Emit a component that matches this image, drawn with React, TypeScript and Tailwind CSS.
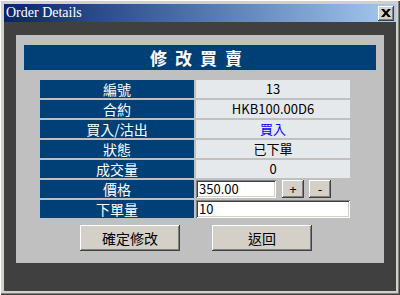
import React from 'react';

const cjk = "font-['Noto_Sans_CJK_TC','Noto_Sans_CJK_SC',sans-serif]";
const raised =
  'bg-[#d4d0c8] shadow-[inset_-1px_-1px_#404040,inset_1px_1px_#ffffff,inset_-2px_-2px_#808080,inset_2px_2px_#d4d0c8]';
const sunken =
  'bg-white shadow-[inset_1px_1px_#808080,inset_-1px_-1px_#ffffff,inset_2px_2px_#404040,inset_-2px_-2px_#d4d0c8]';

function Label({ children }: { children: React.ReactNode }) {
  return (
    <div className={`w-[154px] h-[18px] bg-[#013f77] text-white text-[14px] leading-[18px] text-center ${cjk}`}>
      {children}
    </div>
  );
}

function Value({ children, blue }: { children: React.ReactNode; blue?: boolean }) {
  return (
    <div
      className={`w-[154px] h-[18px] bg-[#e6e9ec] text-[13px] leading-[18px] text-center ${cjk} ${
        blue ? 'text-[#0000ff]' : 'text-black'
      }`}
    >
      {children}
    </div>
  );
}

export default function App() {
  const rows: [string, string, boolean?][] = [
    ['編號', '13'],
    ['合約', 'HKB100.00D6'],
    ['買入/沽出', '買入', true],
    ['狀態', '已下單'],
    ['成交量', '0'],
  ];

  return (
    <div className="w-[400px] h-[295px] bg-[#d4d0c8] p-[4px] flex flex-col shadow-[inset_1px_1px_#ffffff,inset_-1px_-1px_#404040,inset_-2px_-2px_#808080]">
      {/* Title bar */}
      <div className="h-[18px] flex items-center justify-between bg-gradient-to-r from-[#0a246a] to-[#a6caf0] pl-[2px] pr-[2px]">
        <span className="text-white text-[14px] leading-none font-['Liberation_Serif',serif]">Order Details</span>
        <div className={`w-[16px] h-[15px] flex items-center justify-center ${raised}`}>
          <svg width="10" height="8" viewBox="0 0 10 8">
            <path d="M0 0h3l2 2.6L7 0h3L6.5 4 10 8H7L5 5.4 3 8H0l3.5-4z" fill="#000" />
          </svg>
        </div>
      </div>

      {/* Body */}
      <div className="flex-1 bg-[#404040] pt-[13px] pl-[12px]">
        <div className="w-[368px] h-[228px] bg-[#c0c0c0] pt-[10px] px-[8px]">
          <div className={`h-[25px] bg-[#013f77] text-white text-[17px] font-bold leading-[25px] text-center tracking-[8px] ${cjk}`}>
            修改買賣
          </div>

          <div className="mt-[10px] ml-[16px] flex flex-col gap-[2px]">
            {rows.map(([k, v, blue]) => (
              <div key={k} className="flex gap-[2px]">
                <Label>{k}</Label>
                <Value blue={blue}>{v}</Value>
              </div>
            ))}
            <div className="flex gap-[2px]">
              <Label>價格</Label>
              <div className="flex items-center gap-[5px]">
                <div className={`w-[80px] h-[18px] pl-[3px] text-[13px] leading-[18px] ${cjk} ${sunken}`}>350.00</div>
                <button className={`w-[22px] h-[18px] ml-[1px] text-[13px] leading-none ${raised}`}>+</button>
                <button className={`w-[22px] h-[18px] text-[13px] leading-none ${raised}`}>-</button>
              </div>
            </div>
            <div className="flex gap-[2px]">
              <Label>下單量</Label>
              <div className={`w-[154px] h-[18px] pl-[3px] text-[13px] leading-[18px] ${cjk} ${sunken}`}>10</div>
            </div>
          </div>

          <div className="mt-[7px] ml-[56px] flex gap-[32px]">
            <button className={`w-[100px] h-[26px] text-[14px] ${cjk} ${raised}`}>確定修改</button>
            <button className={`w-[100px] h-[26px] text-[14px] ${cjk} ${raised}`}>返回</button>
          </div>
        </div>
      </div>
    </div>
  );
}
